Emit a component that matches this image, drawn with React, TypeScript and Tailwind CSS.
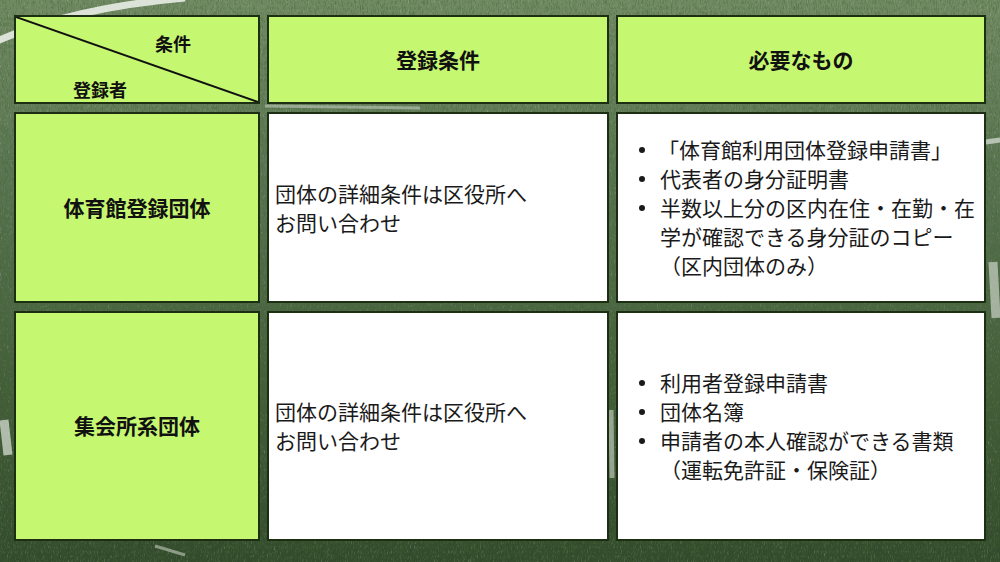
import React from "react";

const font = { fontFamily: '"Noto Sans CJK JP", "Noto Sans", sans-serif' };

function Grass() {
  return (
    <svg className="absolute inset-0" width="1000" height="562" viewBox="0 0 1000 562">
      <defs>
        <linearGradient id="g" x1="0" y1="0" x2="0" y2="1">
          <stop offset="0" stopColor="#728b64" />
          <stop offset="0.3" stopColor="#5a7552" />
          <stop offset="0.7" stopColor="#425d38" />
          <stop offset="1" stopColor="#324a2b" />
        </linearGradient>
        <filter id="n" x="0" y="0" width="100%" height="100%">
          <feTurbulence type="turbulence" baseFrequency="0.55 0.18" numOctaves="3" seed="4" />
          <feColorMatrix type="matrix" values="0 0 0 0 0.06  0 0 0 0 0.13  0 0 0 0 0.04  1.4 0 0 0 -0.25" />
        </filter>
        <filter id="n2" x="0" y="0" width="100%" height="100%">
          <feTurbulence type="turbulence" baseFrequency="0.7 0.22" numOctaves="2" seed="11" />
          <feColorMatrix type="matrix" values="0 0 0 0 0.82  0 0 0 0 0.9  0 0 0 0 0.78  0 1.3 0 0 -0.45" />
        </filter>
      </defs>
      <rect width="1000" height="562" fill="url(#g)" />
      <rect width="1000" height="562" filter="url(#n2)" opacity="0.35" />
      <rect width="1000" height="562" filter="url(#n)" opacity="0.7" />
      <path d="M185 -2 Q 70 8 -5 42" stroke="#e8ece4" strokeWidth="7" fill="none" opacity="0.9" />
      <path d="M986 142 L1000 140" stroke="#dfe4dc" strokeWidth="5" opacity="0.7" />
      <path d="M993 262 L996 318" stroke="#dfe4dc" strokeWidth="9" opacity="0.6" />
      <path d="M4 420 L8 455" stroke="#dfe4dc" strokeWidth="9" opacity="0.7" />
      <path d="M611 410 L612 478" stroke="#dfe4dc" strokeWidth="5" opacity="0.55" />
      <path d="M155 546 L185 555" stroke="#dfe4dc" strokeWidth="3" opacity="0.5" />
      <path d="M265 106 L420 108" stroke="#dfe4dc" strokeWidth="3" opacity="0.45" />
    </svg>
  );
}

const lime = "bg-[#c6f771] border-2 border-[#1d2f12]";
const white = "bg-white border-2 border-[#1d2f12]";

function Bullets({ items }: { items: React.ReactNode[] }) {
  return (
    <ul className="text-[21px] leading-[29px] text-[#1a1a1a]">
      {items.map((it, i) => (
        <li key={i} className="flex">
          <span className="w-[42px] shrink-0 pl-[21px] flex items-start pt-[12px]">
            <span className="block w-[6px] h-[6px] rounded-full bg-[#1a1a1a]" />
          </span>
          <span className="whitespace-nowrap">{it}</span>
        </li>
      ))}
    </ul>
  );
}

export default function App() {
  return (
    <div className="relative w-[1000px] h-[562px] overflow-hidden" style={font}>
      <Grass />
      <div className="relative pl-[14px] pt-[15px] grid grid-cols-[246px_342px_370px] grid-rows-[89px_191px_230px] gap-x-[7px] gap-y-[8px]">
        <div className={`${lime} relative`}>
          <svg className="absolute inset-0 w-full h-full" viewBox="0 0 242 85" preserveAspectRatio="none">
            <line x1="0" y1="0" x2="242" y2="85" stroke="#111" strokeWidth="2" />
          </svg>
          <span className="absolute left-[139px] top-[17px] text-[18px] font-bold text-[#111] leading-none">条件</span>
          <span className="absolute left-[57px] top-[63px] text-[18px] font-bold text-[#111] leading-none">登録者</span>
        </div>
        <div className={`${lime} flex items-center justify-center text-[21px] font-bold text-[#111]`}>登録条件</div>
        <div className={`${lime} flex items-center justify-center text-[21px] font-bold text-[#111]`}>必要なもの</div>

        <div className={`${lime} flex items-center justify-center text-[21px] font-bold text-[#111]`}>体育館登録団体</div>
        <div className={`${white} flex items-center pl-[6px] text-[21px] leading-[29px] text-[#1a1a1a]`}>
          <p>団体の詳細条件は区役所へ<br />お問い合わせ</p>
        </div>
        <div className={`${white} flex items-center`}>
          <Bullets
            items={[
              <span className="-ml-[2px]">「体育館利用団体登録申請書」</span>,
              "代表者の身分証明書",
              <>半数以上分の区内在住・在勤・在<br />学が確認できる身分証のコピー<br />（区内団体のみ）</>,
            ]}
          />
        </div>

        <div className={`${lime} flex items-center justify-center text-[21px] font-bold text-[#111]`}>集会所系団体</div>
        <div className={`${white} flex items-center pl-[6px] text-[21px] leading-[29px] text-[#1a1a1a]`}>
          <p>団体の詳細条件は区役所へ<br />お問い合わせ</p>
        </div>
        <div className={`${white} flex items-center`}>
          <Bullets
            items={["利用者登録申請書", "団体名簿", <>申請者の本人確認ができる書類<br />（運転免許証・保険証）</>]}
          />
        </div>
      </div>
    </div>
  );
}
